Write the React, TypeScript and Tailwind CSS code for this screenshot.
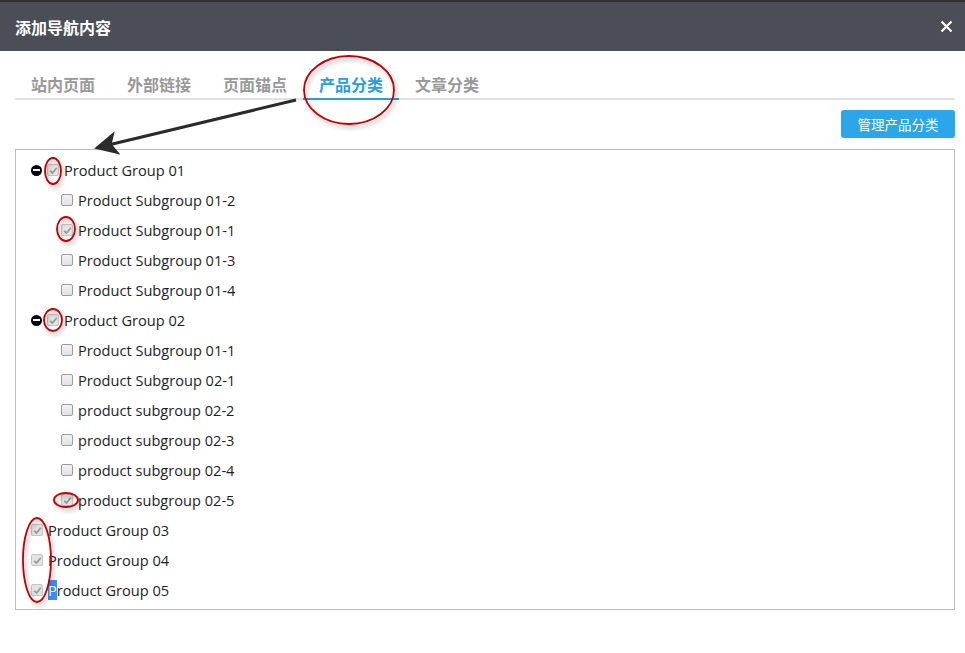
import React from "react";

type Row = { label: string; level: "group" | "sub" | "leaf"; checked?: boolean; hl?: boolean };

const rows: Row[] = [
  { label: "Product Group 01", level: "group", checked: true },
  { label: "Product Subgroup 01-2", level: "sub" },
  { label: "Product Subgroup 01-1", level: "sub", checked: true },
  { label: "Product Subgroup 01-3", level: "sub" },
  { label: "Product Subgroup 01-4", level: "sub" },
  { label: "Product Group 02", level: "group", checked: true },
  { label: "Product Subgroup 01-1", level: "sub" },
  { label: "Product Subgroup 02-1", level: "sub" },
  { label: "product subgroup 02-2", level: "sub" },
  { label: "product subgroup 02-3", level: "sub" },
  { label: "product subgroup 02-4", level: "sub" },
  { label: "product subgroup 02-5", level: "sub", checked: true },
  { label: "Product Group 03", level: "leaf", checked: true },
  { label: "Product Group 04", level: "leaf", checked: true },
  { label: "Product Group 05", level: "leaf", checked: true, hl: true },
];

const tabs = ["站内页面", "外部链接", "页面锚点", "产品分类", "文章分类"];

function Checkbox({ checked }: { checked?: boolean }) {
  if (checked) {
    return (
      <span className="w-[12px] h-[12px] rounded-[2px] border border-[#c4c4c4] bg-[#e4e4e4] flex items-center justify-center shrink-0">
        <svg width="9" height="9" viewBox="0 0 9 9">
          <path d="M1.2 4.8 L3.5 7 L7.8 1.8" fill="none" stroke="#9a9a9a" strokeWidth="1.8" />
        </svg>
      </span>
    );
  }
  return <span className="w-[12px] h-[12px] rounded-[2px] border border-[#9c9c9c] bg-gradient-to-b from-[#f2f2f2] to-[#e2e2e2] shrink-0" />;
}

function Minus() {
  return (
    <span className="w-[11px] h-[11px] rounded-full bg-black flex items-center justify-center shrink-0">
      <span className="w-[7px] h-[2px] bg-white" />
    </span>
  );
}

export default function App() {
  return (
    <div className="relative w-[965px] h-[653px] bg-white overflow-hidden" style={{ fontFamily: '"Open Sans", "Noto Sans CJK SC", sans-serif' }}>
      <div className="h-[51px] bg-[#4b4e56] border-t-2 border-[#2e3035] flex items-center justify-between pl-[15px] pr-[12px]">
        <span className="text-white text-[16px] font-bold" style={{ fontFamily: '"Noto Sans CJK SC", sans-serif' }}>添加导航内容</span>
        <svg width="13" height="13" viewBox="0 0 13 13">
          <path d="M1.5 1.5 L11.5 11.5 M11.5 1.5 L1.5 11.5" stroke="#fff" strokeWidth="2.2" />
        </svg>
      </div>

      <div className="ml-[15px] mr-[10px] mt-[19px] flex border-b-2 border-[#e2e2e2] h-[30px]" style={{ fontFamily: '"Noto Sans CJK SC", sans-serif' }}>
        {tabs.map((t) => (
          <div
            key={t}
            className={`px-4 -mb-[2px] flex items-start text-[16px] font-bold leading-[28px] ${t === "产品分类" ? "text-[#2a9de0] border-b-2 border-[#2a9de0]" : "text-[#999999]"}`}
          >
            {t}
          </div>
        ))}
      </div>

      <div className="flex justify-end pr-[10px] mt-[10px]">
        <button className="h-[28px] w-[114px] rounded-[3px] bg-[#2ba6e9] text-white text-[13.5px]" style={{ fontFamily: '"Noto Sans CJK SC", sans-serif' }}>管理产品分类</button>
      </div>

      <div className="ml-[15px] mr-[10px] mt-[11px] border border-[#bdbdbd] pt-[5px] pb-[4px] text-[14.6px] text-[#1e1e1e]">
        {rows.map((r, i) => (
          <div key={i} className={`h-[30px] flex items-center ${r.level === "sub" ? "pl-[45px]" : "pl-[15px]"}`}>
            {r.level === "group" && <Minus />}
            {r.level === "group" && <span className="w-[5px]" />}
            <Checkbox checked={r.checked} />
            <span className="ml-[5px] leading-[18px]">
              {r.hl ? (
                <>
                  <span className="bg-[#3390ff] text-white">P</span>
                  {r.label.slice(1)}
                </>
              ) : (
                r.label
              )}
            </span>
          </div>
        ))}
      </div>

      <svg className="absolute inset-0 pointer-events-none" width="965" height="653">
        <defs>
          <filter id="sh" x="-30%" y="-30%" width="160%" height="160%">
            <feDropShadow dx="2" dy="3" stdDeviation="2" floodColor="#000" floodOpacity="0.3" />
          </filter>
          <marker id="ah" markerWidth="8" markerHeight="8" refX="6" refY="4" orient="auto" markerUnits="strokeWidth">
            <path d="M0 0 L8 4 L0 8 L2 4 Z" fill="#2b2b2b" />
          </marker>
        </defs>
        <line x1="296" y1="100" x2="100" y2="147" stroke="#2b2b2b" strokeWidth="3" markerEnd="url(#ah)" />
        <g fill="none" stroke="#c00000" strokeWidth="1.8" filter="url(#sh)">
          <ellipse cx="349" cy="90" rx="45" ry="34" />
          <ellipse cx="53" cy="171" rx="8" ry="13" />
          <ellipse cx="66" cy="229" rx="9" ry="12" />
          <ellipse cx="53" cy="320" rx="9" ry="11" />
          <ellipse cx="66" cy="500" rx="12" ry="7" />
          <ellipse cx="37" cy="560" rx="14" ry="42" />
        </g>
      </svg>
    </div>
  );
}
